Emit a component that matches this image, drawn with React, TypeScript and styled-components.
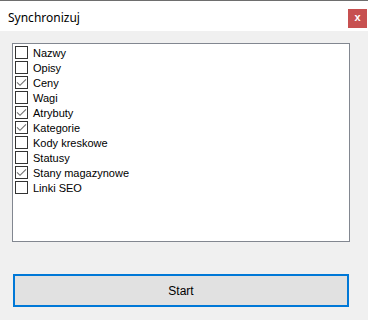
import styled, { createGlobalStyle } from "styled-components";

const GlobalStyle = createGlobalStyle`
  html, body {
    margin: 0;
    padding: 0;
    background: #f0f0f0;
  }
`;

const items: { label: string; checked: boolean }[] = [
  { label: "Nazwy", checked: false },
  { label: "Opisy", checked: false },
  { label: "Ceny", checked: true },
  { label: "Wagi", checked: false },
  { label: "Atrybuty", checked: true },
  { label: "Kategorie", checked: true },
  { label: "Kody kreskowe", checked: false },
  { label: "Statusy", checked: false },
  { label: "Stany magazynowe", checked: true },
  { label: "Linki SEO", checked: false },
];

const Check = () => (
  <svg width="11" height="11" viewBox="0 0 11 11">
    <path d="M1 5.3 L4 8.3 L10 2.3" fill="none" stroke="#707070" strokeWidth="1.1" />
  </svg>
);

export default function App() {
  return (
    <Window>
      <GlobalStyle />
      <TitleBar>
        <Title>Synchronizuj</Title>
        <CloseButton>x</CloseButton>
      </TitleBar>
      <Body>
        <ListBox>
          {items.map((it) => (
            <Row key={it.label}>
              <Box>{it.checked && <Check />}</Box>
              <Label>{it.label}</Label>
            </Row>
          ))}
        </ListBox>
        <StartButton>Start</StartButton>
      </Body>
    </Window>
  );
}

const Window = styled.div`
  width: 368px;
  height: 320px;
  display: flex;
  flex-direction: column;
  background: #f0f0f0;
  border-top: 1px solid #6e6e6e;
  box-sizing: border-box;
  font-family: "Liberation Sans", Arial, sans-serif;
`;

const TitleBar = styled.div`
  height: 30px;
  background: #fff;
  display: flex;
  align-items: center;
  justify-content: space-between;
  padding: 0 1px 0 8px;
`;

const Title = styled.span`
  font-family: "Noto Sans", sans-serif;
  font-size: 12px;
  color: #000;
  margin-top: 2px;
`;

const CloseButton = styled.div`
  width: 19px;
  height: 19px;
  background: #c75050;
  color: #fff;
  font-size: 11px;
  font-weight: bold;
  display: flex;
  align-items: center;
  justify-content: center;
  margin-top: 4px;
  line-height: 1;
  padding-bottom: 2px;
  box-sizing: border-box;
`;

const Body = styled.div`
  flex: 1;
  display: flex;
  flex-direction: column;
  padding: 12px 18px 0 12px;
`;

const ListBox = styled.div`
  height: 199px;
  background: #fff;
  border: 1px solid #828790;
  padding: 1px 0 0 2px;
  display: flex;
  flex-direction: column;
  box-sizing: border-box;
`;

const Row = styled.div`
  height: 15px;
  display: flex;
  align-items: center;
  gap: 5px;
`;

const Box = styled.div`
  width: 13px;
  height: 13px;
  border: 1px solid #333;
  box-sizing: border-box;
  background: #fff;
  display: flex;
  align-items: center;
  justify-content: center;
`;

const Label = styled.span`
  font-size: 11px;
  color: #000;
`;

const StartButton = styled.div`
  margin: 32px 0 0 1px;
  height: 33px;
  width: 336px;
  box-sizing: border-box;
  border: 2px solid #0078d7;
  background: #e1e1e1;
  display: flex;
  align-items: center;
  justify-content: center;
  font-size: 12px;
  color: #000;
`;
